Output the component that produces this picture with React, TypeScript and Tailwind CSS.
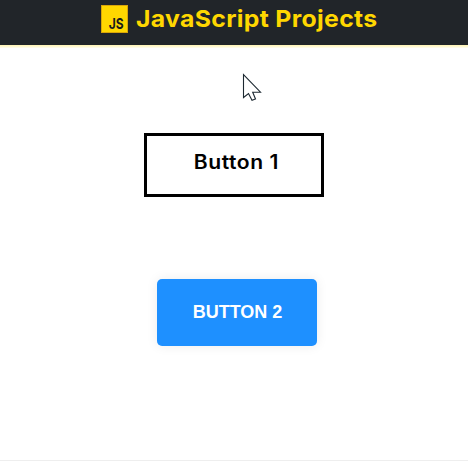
function Logo() {
  return (
    <span className="mr-[8px] mt-[5px] flex h-[28px] w-[27px] shrink-0 items-end justify-end border border-[#d9a509] bg-[#ffd700] pb-[1px] pr-[3px]">
      <span className="origin-bottom-right scale-x-[.8] font-['Inter',sans-serif] text-[15px] font-bold leading-[15px] text-[#171a1c]">
        JS
      </span>
    </span>
  );
}

function Cursor() {
  return (
    <svg className="absolute left-[242px] top-[73px]" width="22" height="30" viewBox="0 0 22 30">
      <path
        d="M1.5 1.5V24.5L6.5 20.5L10 27.3L13.5 26L10.7 19.2H18.5Z"
        fill="white"
        stroke="#1c2831"
        strokeWidth="1.1"
      />
    </svg>
  );
}

export default function App() {
  return (
    <main className="relative flex h-[461px] w-[468px] flex-col items-center overflow-hidden bg-white">
      <header className="flex h-[45px] w-full shrink-0 bg-[#212529] pl-[101px]">
        <Logo />
        <h1 className="mt-[4px] origin-left scale-x-[1.055] whitespace-nowrap font-['Inter',sans-serif] text-[23.5px] font-bold leading-[30px] tracking-[0.3px] text-[#ffd700]">
          JavaScript Projects
        </h1>
      </header>
      <div className="h-[3px] w-full shrink-0 bg-linear-to-b from-[#fff3b0] to-[#fffdf0]" />
      <button className="mt-[85px] flex h-[64px] w-[180px] shrink-0 justify-center border-[3px] border-black bg-white pl-[4px] pt-[14px] font-['Inter',sans-serif] text-[19.5px] font-semibold leading-[24px] tracking-[0.5px] text-black">
        <span className="scale-x-[1.08]">Button 1</span>
      </button>
      <button className="ml-[6px] mt-[82px] flex h-[67px] w-[160px] shrink-0 items-center justify-center rounded-[5px] bg-[#1e90ff] pl-[1px] font-['Liberation_Sans',sans-serif] text-[18px] font-bold text-white shadow-[0_0_12px_rgba(0,0,0,0.08)]">
        BUTTON 2
      </button>
      <div className="mt-auto h-px w-full bg-[#eeeeee]" />
      <Cursor />
    </main>
  );
}
